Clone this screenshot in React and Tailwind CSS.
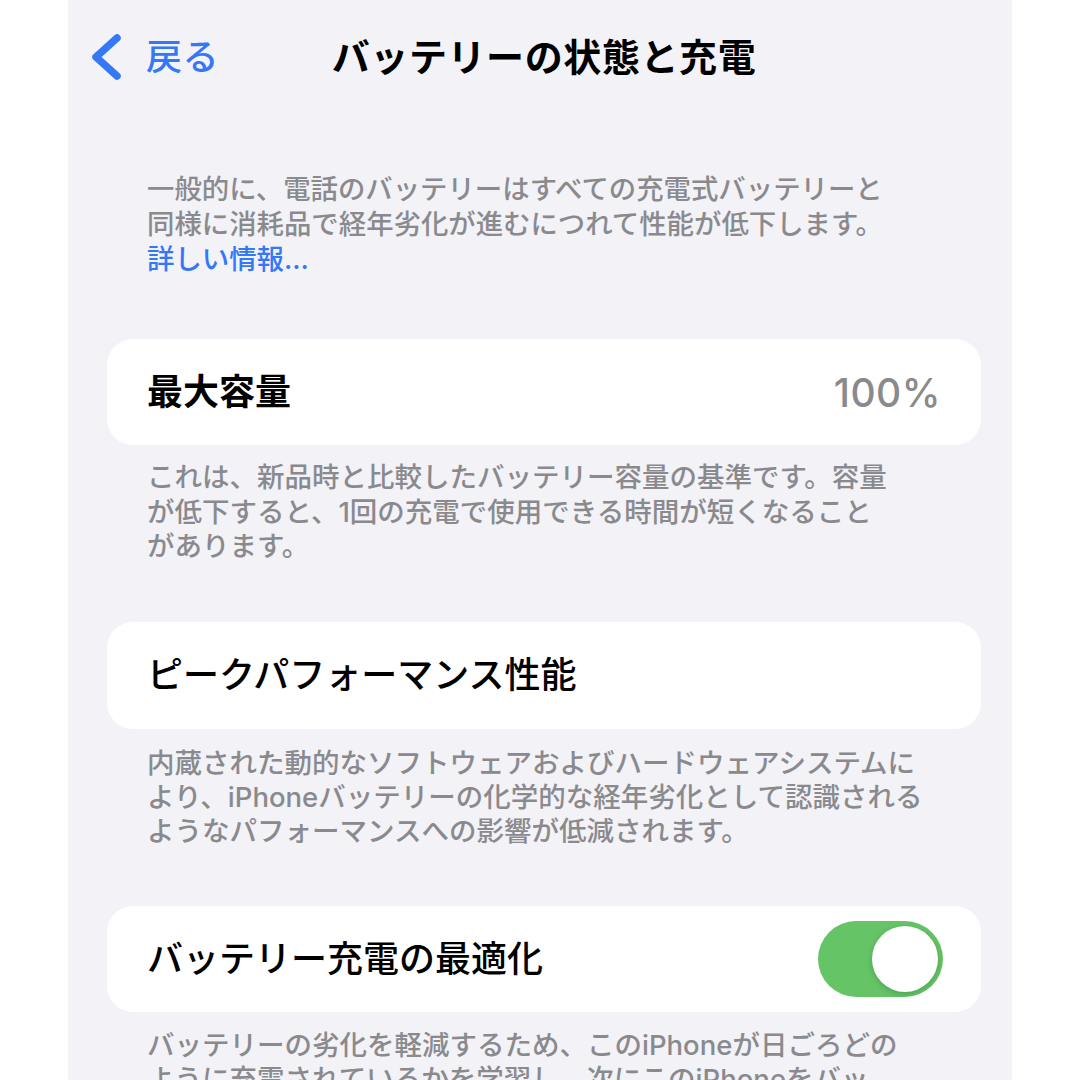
import React from "react";

const font = { fontFamily: '"Inter", "Noto Sans CJK JP", sans-serif' };

function Toggle() {
  return (
    <div className="w-[125px] h-[76px] rounded-full bg-[#65c466] relative shrink-0">
      <div className="absolute right-[5px] top-[5px] w-[66px] h-[66px] rounded-full bg-white shadow-[0_2px_6px_rgba(0,0,0,0.18)]" />
    </div>
  );
}

export default function App() {
  return (
    <div className="w-[1080px] h-[1080px] bg-white flex justify-center overflow-hidden" style={font}>
      <div className="w-[944px] h-[1080px] bg-[#f2f2f7] flex flex-col overflow-hidden">
        <div className="h-[114px] shrink-0 grid grid-cols-[1fr_auto_1fr] items-center">
          <div className="flex items-center pl-[22px] gap-[24px]">
            <svg width="32" height="48" viewBox="0 0 32 48" className="shrink-0">
              <path d="M27 5 L6 24 L27 43" fill="none" stroke="#3478f6" strokeWidth="7.5" strokeLinecap="round" strokeLinejoin="round" />
            </svg>
            <span className="text-[36px] font-medium text-[#3478f6] leading-none tracking-[0.5px]">戻る</span>
          </div>
          <div className="text-[38px] font-bold text-black leading-none tracking-[0.6px] pl-[8px]">バッテリーの状態と充電</div>
          <div />
        </div>

        <div className="pl-[39px] pr-[31px] flex flex-col">
          <div className="mt-[58px] pl-[40px] text-[27.4px] font-medium leading-[35px] text-[#8a8a8e] whitespace-nowrap">
            一般的に、電話のバッテリーはすべての充電式バッテリーと<br />
            同様に消耗品で経年劣化が進むにつれて性能が低下します。<br />
            <span className="text-[#3478f6]">詳しい情報...</span>
          </div>

          <div className="mt-[62px] h-[106px] rounded-[26px] bg-white flex items-center justify-between px-[40px]">
            <span className="text-[36px] font-bold text-black leading-none">最大容量</span>
            <span className="text-[39px] font-medium text-[#8a8a8e] leading-none tracking-[0.5px]">100%</span>
          </div>
          <div className="mt-[15px] pl-[40px] text-[27.5px] font-medium leading-[34.5px] text-[#8a8a8e] whitespace-nowrap">
            これは、新品時と比較したバッテリー容量の基準です。容量<br />
            が低下すると、1回の充電で使用できる時間が短くなること<br />
            があります。
          </div>

          <div className="mt-[58px] h-[107px] rounded-[26px] bg-white flex items-center px-[40px]">
            <span className="text-[36px] font-medium text-black leading-none">ピークパフォーマンス性能</span>
          </div>
          <div className="mt-[17px] pl-[40px] text-[27.5px] font-medium leading-[34px] text-[#8a8a8e] whitespace-nowrap">
            内蔵された動的なソフトウェアおよびハードウェアシステムに<br />
            より、iPhoneバッテリーの化学的な経年劣化として認識される<br />
            ようなパフォーマンスへの影響が低減されます。
          </div>

          <div className="mt-[58px] h-[106px] rounded-[26px] bg-white flex items-center justify-between pl-[40px] pr-[38px] shrink-0">
            <span className="text-[36px] font-medium text-black leading-none">バッテリー充電の最適化</span>
            <Toggle />
          </div>
          <div className="mt-[16px] pl-[40px] text-[27.5px] font-medium leading-[34px] text-[#8a8a8e] whitespace-nowrap">
            バッテリーの劣化を軽減するため、このiPhoneが日ごろどの<br />
            ように充電されているかを学習し、次にこのiPhoneをバッ<br />
            テリー
          </div>
        </div>
      </div>
    </div>
  );
}
